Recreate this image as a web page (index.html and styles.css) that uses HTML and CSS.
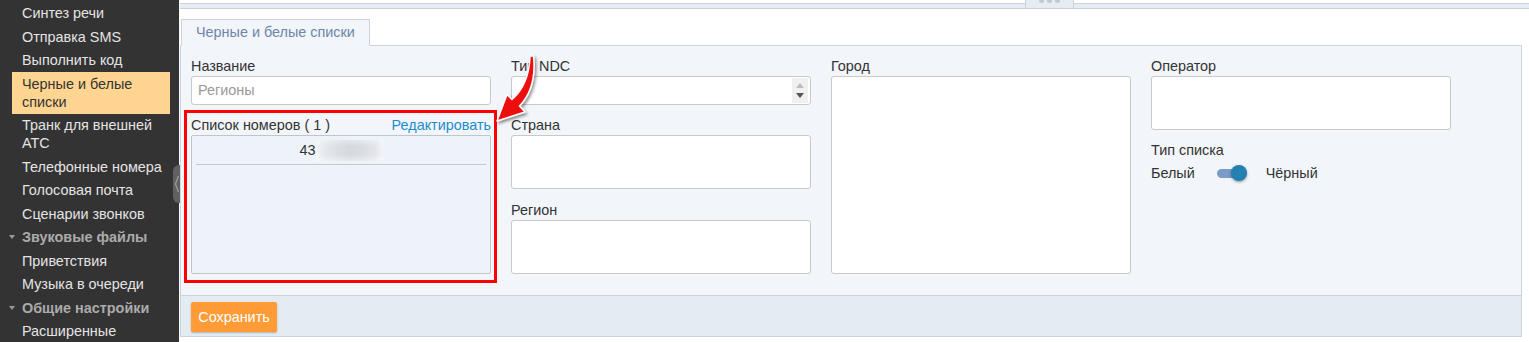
FILE: index.html
```html
<!DOCTYPE html>
<html lang="ru">
<head>
<meta charset="utf-8">
<title>Черные и белые списки</title>
<link rel="stylesheet" href="styles.css">
</head>
<body>
<div class="app">
  <aside class="sidebar">
    <ul class="nav">
      <li class="nav-item">Синтез речи</li>
      <li class="nav-item">Отправка SMS</li>
      <li class="nav-item">Выполнить код</li>
      <li class="nav-item active">Черные и белые<br>списки</li>
      <li class="nav-item">Транк для внешней<br>АТС</li>
      <li class="nav-item">Телефонные номера</li>
      <li class="nav-item">Голосовая почта</li>
      <li class="nav-item">Сценарии звонков</li>
      <li class="nav-section"><svg class="caret" viewBox="0 0 6 4" width="6" height="4"><path d="M0 0H6L3 4Z"/></svg>Звуковые файлы</li>
      <li class="nav-item">Приветствия</li>
      <li class="nav-item">Музыка в очереди</li>
      <li class="nav-section"><svg class="caret" viewBox="0 0 6 4" width="6" height="4"><path d="M0 0H6L3 4Z"/></svg>Общие настройки</li>
      <li class="nav-item">Расширенные</li>
    </ul>
    <div class="collapse-handle"><svg viewBox="0 0 7 38" width="7" height="38"><polyline points="5.5,11 2.5,19 5.5,27" fill="none" stroke="#9a9a9a" stroke-width="1.3"/></svg></div>
  </aside>

  <main class="main">
    <div class="splitter">
      <div class="split-line split-left"></div>
      <div class="grip"><i></i><i></i><i></i></div>
      <div class="split-line split-right"></div>
    </div>

    <div class="tabs">
      <div class="tab">Черные и белые списки</div>
    </div>

    <div class="card">
      <div class="form">
        <div class="col">
          <div class="field">
            <span class="lbl">Название</span>
            <div class="box box-input placeholder">Регионы</div>
          </div>
          <div class="annot">
            <div class="lbl-row"><span>Список номеров ( 1 )</span><span class="link">Редактировать</span></div>
            <div class="list">
              <div class="list-row"><span>43</span><span class="blur"></span></div>
            </div>
          </div>
        </div>

        <div class="col">
          <div class="field">
            <span class="lbl">Тип NDC</span>
            <div class="box box-input select">
              <div class="spin">
                <svg viewBox="0 0 8 5" width="8" height="5"><path d="M0 5L4 0L8 5Z" fill="#bdbdbd"/></svg>
                <svg viewBox="0 0 8 5" width="8" height="5"><path d="M0 0H8L4 5Z" fill="#555"/></svg>
              </div>
            </div>
          </div>
          <div class="field">
            <span class="lbl">Страна</span>
            <div class="box box-sm"></div>
          </div>
          <div class="field field-gap">
            <span class="lbl">Регион</span>
            <div class="box box-sm"></div>
          </div>
        </div>

        <div class="col">
          <div class="field">
            <span class="lbl">Город</span>
            <div class="box box-tall"></div>
          </div>
        </div>

        <div class="col">
          <div class="field">
            <span class="lbl">Оператор</span>
            <div class="box box-sm"></div>
          </div>
          <div class="field">
            <span class="lbl">Тип списка</span>
            <div class="toggle-row">
              <span>Белый</span>
              <span class="toggle"><span class="track"></span><span class="knob"></span></span>
              <span>Чёрный</span>
            </div>
          </div>
        </div>
      </div>

      <div class="footer">
        <button class="btn">Сохранить</button>
      </div>
    </div>
  </main>

  <svg class="arrow" viewBox="0 0 1529 342" width="1529" height="342">
    <defs>
      <filter id="sh" x="-50%" y="-50%" width="200%" height="200%">
        <feDropShadow dx="1.5" dy="2" stdDeviation="1.6" flood-color="#000" flood-opacity="0.45"/>
      </filter>
    </defs>
    <path d="M530 56 C529.5 74 524 89 512 99.5 L507 94.5 L497 121 L525 112 L519.5 106 C532 93 535.5 75 533.5 56 Z" fill="#ee1111" stroke="#fff" stroke-width="1.5" stroke-linejoin="round" filter="url(#sh)"/>
  </svg>
</div>
</body>
</html>
```

FILE: styles.css
```css
html, body {
  margin: 0;
  padding: 0;
  background: #fff;
}

body {
  font-family: "Liberation Sans", Arial, sans-serif;
  font-size: 14.4px;
  color: #333;
}

.app {
  display: flex;
  height: 342px;
  overflow: hidden;
  position: relative;
}

/* Sidebar */
.sidebar {
  width: 179px;
  flex: none;
  background: #333333;
  position: relative;
}

.nav {
  list-style: none;
  margin: 0;
  padding: 1.5px 0 0;
}

.nav-item {
  margin: 0 9px 0 12px;
  padding: 2.75px 2px 2.75px 10px;
  line-height: 18px;
  color: #e4e4e4;
  white-space: nowrap;
}

.nav-item.active {
  background: #ffd591;
  color: #333;
}

.nav-section {
  display: flex;
  align-items: center;
  padding: 2.75px 0 2.75px 9px;
  line-height: 18px;
  font-weight: bold;
  color: #ababab;
}

.caret {
  fill: #9a9a9a;
  margin-right: 7px;
}

.collapse-handle {
  position: absolute;
  left: 173px;
  top: 165px;
  width: 7px;
  height: 38px;
  background: #616161;
  border-radius: 6px 0 0 6px;
}

.collapse-handle svg {
  display: block;
}

/* Main */
.main {
  flex: 1;
  min-width: 0;
  border-left: 1px solid #f7f7f7;
  background: #fff;
  display: flex;
  flex-direction: column;
}

.splitter {
  display: flex;
  height: 9px;
  flex: none;
}

.split-line {
  margin-top: 3px;
  height: 4px;
  background: #e6ecf3;
  border-top: 1px solid #ccd2d9;
  border-bottom: 1px solid #ccd2d9;
}

.split-left {
  width: 845px;
}

.split-right {
  flex: 1;
}

.grip {
  width: 47px;
  height: 8px;
  background: #e6ecf3;
  border: 1px solid #ccd2d9;
  border-top: none;
  display: flex;
  justify-content: center;
  gap: 3px;
  overflow: hidden;
}

.grip i {
  display: block;
  width: 5px;
  height: 5px;
  margin-top: -2px;
  border-radius: 50%;
  background: #c3c9d1;
}

/* Tabs */
.tabs {
  display: flex;
  padding-top: 10px;
  margin-right: 7px;
  border-bottom: 1px solid #cdd3da;
  height: 26px;
}

.tab {
  margin-left: 1px;
  margin-bottom: -1px;
  height: 25px;
  padding: 0 14px;
  line-height: 25px;
  background: #f2f5f9;
  border: 1px solid #cdd3da;
  border-bottom-color: #f2f5f9;
  color: #6d86a8;
}

/* Card */
.card {
  margin-right: 7px;
  background: #f2f5f9;
  border-left: 1px solid #cdd3da;
  border-right: 1px solid #cdd3da;
  border-bottom: 1px solid #cdd3da;
}

.form {
  display: grid;
  grid-template-columns: repeat(4, 300px);
  column-gap: 20px;
  align-items: start;
  padding: 11px 10px 12px;
}

.field + .field {
  margin-top: 11px;
}

.field + .field-gap {
  margin-top: 12px;
}

.lbl {
  display: block;
  line-height: 18px;
  margin-bottom: 1px;
  color: #333;
}

.box {
  box-sizing: border-box;
  background: #fff;
  border: 1px solid #c9c9c9;
  border-radius: 3px;
}

.box-input {
  height: 29px;
}

.box-sm {
  height: 54px;
}

.box-tall {
  height: 198px;
}

.placeholder {
  padding: 0 6px;
  line-height: 27px;
  color: #999;
}

.select {
  display: flex;
  justify-content: flex-end;
}

.spin {
  width: 16px;
  margin: 1px 2px 1px 0;
  background: #f0f0f0;
  display: flex;
  flex-direction: column;
  align-items: center;
  justify-content: space-around;
  padding: 2px 0;
}

.spin svg {
  display: block;
}

/* Annotated list */
.annot {
  margin: 5px -6px 0 -7px;
  border: 3px solid #ff0000;
  padding: 3px 3px 6px 4px;
}

.lbl-row {
  display: flex;
  justify-content: space-between;
  line-height: 18px;
  margin-bottom: 1px;
}

.link {
  color: #1b8dcf;
}

.list {
  box-sizing: border-box;
  height: 139px;
  background: #eef3fa;
  border: 1px solid #bfc5cc;
  border-radius: 2px;
}

.list-row {
  margin: 0 4px;
  height: 28px;
  border-bottom: 1px solid #c3c8ce;
  display: flex;
  justify-content: center;
  align-items: center;
  color: #333;
}

.blur {
  display: inline-block;
  width: 67px;
  height: 21px;
  background:
    linear-gradient(180deg, rgba(255,255,255,0.35) 0, rgba(255,255,255,0) 30%, rgba(255,255,255,0) 70%, rgba(255,255,255,0.45) 100%),
    linear-gradient(90deg, #f3f5f8 0, #e6e9ed 12%, #dcdfe4 30%, #d5d9df 50%, #dadde2 70%, #e2e5e9 88%, #f2f4f7 100%);
}

/* Toggle */
.toggle-row {
  display: flex;
  align-items: center;
  height: 18px;
  margin-top: 5px;
}

.toggle {
  position: relative;
  width: 30px;
  height: 18px;
  margin: 0 19px 0 22px;
}

.track {
  position: absolute;
  left: 0;
  top: 5px;
  width: 26px;
  height: 9px;
  border-radius: 5px;
  background: #7b9cc7;
}

.knob {
  position: absolute;
  left: 14px;
  top: 1px;
  width: 16px;
  height: 16px;
  border-radius: 50%;
  background: #2380b2;
  box-shadow: 0 1px 3px rgba(0, 0, 0, 0.4);
}

/* Footer */
.footer {
  border-top: 1px solid #cdd3da;
  background: #e5ebf2;
  padding: 6px 10px 4px;
}

.btn {
  display: block;
  width: 86px;
  height: 30px;
  padding: 0;
  border: none;
  border-radius: 2px;
  background: #ff9c38;
  color: #fff;
  font-family: "Liberation Sans", Arial, sans-serif;
  font-size: 14.4px;
  box-shadow: 0 1px 2px rgba(0, 0, 0, 0.25);
}

/* Annotation arrow */
.arrow {
  position: absolute;
  left: 0;
  top: 0;
  pointer-events: none;
}
```
